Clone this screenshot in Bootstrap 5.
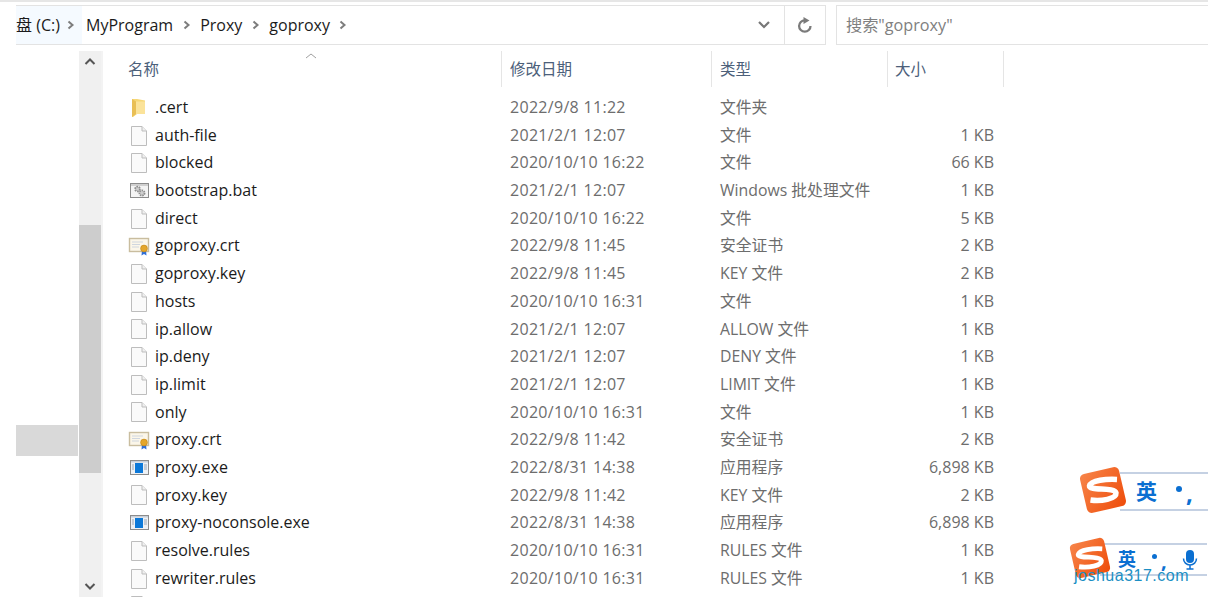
<!DOCTYPE html>
<html lang="zh-CN">
<head>
<meta charset="utf-8">
<title>goproxy</title>
<link href="https://cdn.jsdelivr.net/npm/bootstrap@5.3.0/dist/css/bootstrap.min.css" rel="stylesheet">
<style>
html,body{height:616px;overflow:hidden;background:#fff}
body{font-family:"Open Sans","Noto Sans CJK SC",sans-serif;font-size:16px;color:#1b1b1b;position:relative}
.top-rule{height:2px;background:#e6e6e6}
.addr-wrap{height:40px;margin-top:3px;padding-left:16px}
.addr-bar{width:810px;border:1px solid #e3e3e3;border-left:0;height:40px}
.crumbs{flex:1;min-width:0;font-size:16px;line-height:38px}
.crumb-root{width:66px;background:#f5faff;padding-right:6px}
.crumb-gap{width:27px}
.crumb-gap svg,.crumb-root svg{display:block}
.dd-btn{width:40px}
.refresh-btn{width:41px;border-left:1px solid #e3e3e3}
.search-box{margin-left:10px;flex:1;height:40px;border:1px solid #e3e3e3;border-right:0;color:#808080;font-size:16.2px;line-height:38px;padding-left:9px}
.main-area{height:546px;margin-top:6px;padding-left:16px}
.nav-pane{width:62px;position:relative}
.nav-sel{height:31px;margin-top:374px;background:#d9d9d9}
.scroll-rail{width:22px;margin-left:1px;background:#f0f0f0;height:546px}
.scroll-up,.scroll-down{height:21px}
.scroll-spacer{height:153px}
.scroll-thumb{height:248px;background:#cdcdcd}
.scroll-rest{flex:1}
.pane-rule{width:2px;background:#f3f3f3}
.file-list{flex:1;min-width:0;overflow:hidden;height:546px}
.head-row{height:36px;color:#4c607a;font-size:15.5px;position:relative}
.head-row>div{height:36px;line-height:36px;border-right:1px solid #e5e5e5}
.c-name{width:399px;padding-left:25px}
.c-date{width:210px;padding-left:8px}
.c-type{width:176px;padding-left:8px}
.c-size{width:116px;padding-right:10px;text-align:right}
.head-row .c-size{text-align:left;padding-left:7px}
.sort-mark{position:absolute;left:202px;top:1px}
.rows-top{height:7px}
.file-row{height:27.7px;line-height:27.7px;white-space:nowrap}
.file-row .c-name{display:flex;align-items:center;padding-left:25px;color:#1b1b1b}
.file-row .c-date,.file-row .c-type,.file-row .c-size{color:#6d6d6d}
.file-row .c-date{font-size:16px;letter-spacing:.3px}
.file-row .c-type{font-size:15.8px}
.file-row .c-size{font-size:16px}
.f-icon{width:22px;height:22px;margin-right:5px;flex:none}
.ime{position:absolute;display:flex;align-items:center}
.ime-one{left:1120px;top:472px;width:88px;height:39px}
.ime-two{left:1100px;top:543px;width:107px;height:33px}
.ime-bar{width:100%;height:100%;background:#fff;border-top:2px solid #c5d1e3;border-bottom:2px solid #c5d1e3;display:flex;align-items:center;color:#0b6fd1;font-weight:700}
.ime-one .ime-bar{padding-left:16px;font-size:21px}
.ime-two .ime-bar{padding-left:18px;font-size:18px}
.ime-logo{position:absolute}
.ime-one .ime-logo{left:-41px;top:-6px}
.ime-two .ime-logo{left:-31px;top:-6px}
.ime-dot{width:6px;height:6px;border-radius:50%;background:#0b6fd1;flex:none}
.ime-comma{font-size:24px;line-height:1;margin-left:4px;margin-top:2px}
.ime-one .ime-dot{margin-left:19px;margin-top:-6px}
.ime-two .ime-dot{margin-left:16px;margin-top:-6px;width:5px;height:5px}
.ime-two .ime-comma{font-size:20px;margin-left:4px}
.ime-mic{margin-left:15px;flex:none}
.wm{position:absolute;left:1074px;top:565px;font-family:"Liberation Sans",sans-serif;font-size:16px;letter-spacing:.5px;color:#1c8fc4;line-height:22px}
</style>
</head>
<body>
<svg width="0" height="0" class="position-absolute">
<defs>
<linearGradient id="sg-fill" x1="0" y1="0" x2="1" y2="1"><stop offset="0" stop-color="#f7854a"/><stop offset="1" stop-color="#ee4c0a"/></linearGradient>
<symbol id="i-file" viewBox="0 0 22 22"><path d="M3.500 1.500H14L18.500 6V20.500H3.500Z" fill="#fafafa" stroke="#bdbdbd"/><path d="M14 1.500V6H18.500" fill="#f0f0f0" stroke="#bdbdbd"/></symbol>
<symbol id="i-folder" viewBox="0 0 22 22"><path d="M4 2H9L17 3.500V17H9L5 20H4Z" fill="#f6d776"/><path d="M4 2L8 4.500V17L4 20Z" fill="#e9bf55"/><path d="M8 4.500H17V17H8Z" fill="#fbe39a"/></symbol>
<symbol id="i-bat" viewBox="0 0 22 22"><rect x="2.500" y="3.500" width="18" height="14" fill="#f4f4f4" stroke="#8c8c8c"/><rect x="3" y="4" width="17" height="2" fill="#d0d0d0"/><circle cx="9.500" cy="9" r="2.400" fill="#cfcfcf" stroke="#8e8e8e" stroke-width="1.800" stroke-dasharray="1.500 .8"/><circle cx="14" cy="13" r="2.600" fill="#cfcfcf" stroke="#8e8e8e" stroke-width="1.800" stroke-dasharray="1.500 .8"/></symbol>
<symbol id="i-crt" viewBox="0 0 22 22"><rect x="1.500" y="3.500" width="19" height="13" fill="#fbf6e9" stroke="#c9bd9f" stroke-width="1.400"/><path d="M4 7H15M4 9.500H12M4 12H11" stroke="#cfd6df"/><path d="M14 15L13.500 20.500L16 19L18.500 20.500L18 15Z" fill="#2f6fd8"/><circle cx="16" cy="13.500" r="3.400" fill="#e4a62b" stroke="#c28412" stroke-width=".6"/></symbol>
<symbol id="i-exe" viewBox="0 0 22 22"><rect x="2.500" y="3.500" width="18" height="14" fill="#eef1f5" stroke="#8c8c8c"/><rect x="3" y="4" width="17" height="1.500" fill="#c7cfd9"/><rect x="7" y="6" width="8" height="10" fill="#0b78d8"/><path d="M4 8H6M4 10H6M4 12H6M16 8H19M16 10H19M16 12H19" stroke="#9aa7b6"/></symbol>
<symbol id="i-chev" viewBox="0 0 10 12"><path d="M2.500 2.500L6.500 6L2.500 9.500" fill="none" stroke="#7d7d7d" stroke-width="2"/></symbol>
<symbol id="i-sogou" viewBox="0 0 48 48"><rect x="4" y="4" width="40" height="40" rx="5" fill="url(#sg-fill)" transform="rotate(-13 24 24)"/><path d="M38 13.500C28 13 12 14 10.500 20C10 25 36 21 37 27C37.500 33 22 35.500 11.500 34" fill="none" stroke="#fff" stroke-width="5.500"/></symbol>
</defs>
</svg>

<div class="top-rule"></div>
<div class="addr-wrap d-flex">
  <div class="addr-bar d-flex">
    <div class="crumbs d-flex align-items-center">
      <div class="crumb-root d-flex align-items-center justify-content-between"><span>盘 (C:)</span><svg width="10" height="12"><use href="#i-chev"/></svg></div>
      <span class="ms-1">MyProgram</span>
      <div class="crumb-gap d-flex justify-content-center"><svg width="10" height="12"><use href="#i-chev"/></svg></div>
      <span>Proxy</span>
      <div class="crumb-gap d-flex justify-content-center"><svg width="10" height="12"><use href="#i-chev"/></svg></div>
      <span>goproxy</span>
      <div class="crumb-gap d-flex justify-content-center"><svg width="10" height="12"><use href="#i-chev"/></svg></div>
    </div>
    <div class="dd-btn d-flex align-items-center justify-content-center"><svg width="14" height="10" viewBox="0 0 14 10"><path d="M2 2L7 7L12 2" fill="none" stroke="#777" stroke-width="2.200"/></svg></div>
    <div class="refresh-btn d-flex align-items-center justify-content-center"><svg width="16" height="16" viewBox="0 0 16 16"><path d="M13.500 9A5.700 5.700 0 1 1 7.800 3.300" fill="none" stroke="#7b7b7b" stroke-width="2.300"/><path d="M6.500 0L12.500 3.500L6.500 7Z" fill="#7b7b7b"/></svg></div>
  </div>
  <div class="search-box">搜索"goproxy"</div>
</div>

<div class="main-area d-flex">
  <div class="nav-pane"><div class="nav-sel"></div></div>
  <div class="scroll-rail d-flex flex-column">
    <div class="scroll-up d-flex align-items-center justify-content-center"><svg width="12" height="9" viewBox="0 0 12 9"><path d="M1.500 7L6 2.500L10.500 7" fill="none" stroke="#555" stroke-width="2"/></svg></div>
    <div class="scroll-spacer"></div>
    <div class="scroll-thumb"></div>
    <div class="scroll-rest"></div>
    <div class="scroll-down d-flex align-items-center justify-content-center"><svg width="12" height="9" viewBox="0 0 12 9"><path d="M1.500 2L6 6.500L10.500 2" fill="none" stroke="#555" stroke-width="2"/></svg></div>
  </div>
  <div class="pane-rule"></div>
  <div class="file-list">
    <div class="head-row d-flex">
      <div class="c-name">名称</div><div class="c-date">修改日期</div><div class="c-type">类型</div><div class="c-size">大小</div>
      <svg class="sort-mark" width="12" height="8" viewBox="0 0 12 8"><path d="M1 6L6 2L11 6" fill="none" stroke="#a0a0a0"/></svg>
    </div>
    <div class="rows-top"></div>
    <div class="file-row d-flex"><div class="c-name"><svg class="f-icon"><use href="#i-folder"/></svg>.cert</div><div class="c-date">2022/9/8 11:22</div><div class="c-type">文件夹</div><div class="c-size"></div></div>
    <div class="file-row d-flex"><div class="c-name"><svg class="f-icon"><use href="#i-file"/></svg>auth-file</div><div class="c-date">2021/2/1 12:07</div><div class="c-type">文件</div><div class="c-size">1 KB</div></div>
    <div class="file-row d-flex"><div class="c-name"><svg class="f-icon"><use href="#i-file"/></svg>blocked</div><div class="c-date">2020/10/10 16:22</div><div class="c-type">文件</div><div class="c-size">66 KB</div></div>
    <div class="file-row d-flex"><div class="c-name"><svg class="f-icon"><use href="#i-bat"/></svg>bootstrap.bat</div><div class="c-date">2021/2/1 12:07</div><div class="c-type">Windows 批处理文件</div><div class="c-size">1 KB</div></div>
    <div class="file-row d-flex"><div class="c-name"><svg class="f-icon"><use href="#i-file"/></svg>direct</div><div class="c-date">2020/10/10 16:22</div><div class="c-type">文件</div><div class="c-size">5 KB</div></div>
    <div class="file-row d-flex"><div class="c-name"><svg class="f-icon"><use href="#i-crt"/></svg>goproxy.crt</div><div class="c-date">2022/9/8 11:45</div><div class="c-type">安全证书</div><div class="c-size">2 KB</div></div>
    <div class="file-row d-flex"><div class="c-name"><svg class="f-icon"><use href="#i-file"/></svg>goproxy.key</div><div class="c-date">2022/9/8 11:45</div><div class="c-type">KEY 文件</div><div class="c-size">2 KB</div></div>
    <div class="file-row d-flex"><div class="c-name"><svg class="f-icon"><use href="#i-file"/></svg>hosts</div><div class="c-date">2020/10/10 16:31</div><div class="c-type">文件</div><div class="c-size">1 KB</div></div>
    <div class="file-row d-flex"><div class="c-name"><svg class="f-icon"><use href="#i-file"/></svg>ip.allow</div><div class="c-date">2021/2/1 12:07</div><div class="c-type">ALLOW 文件</div><div class="c-size">1 KB</div></div>
    <div class="file-row d-flex"><div class="c-name"><svg class="f-icon"><use href="#i-file"/></svg>ip.deny</div><div class="c-date">2021/2/1 12:07</div><div class="c-type">DENY 文件</div><div class="c-size">1 KB</div></div>
    <div class="file-row d-flex"><div class="c-name"><svg class="f-icon"><use href="#i-file"/></svg>ip.limit</div><div class="c-date">2021/2/1 12:07</div><div class="c-type">LIMIT 文件</div><div class="c-size">1 KB</div></div>
    <div class="file-row d-flex"><div class="c-name"><svg class="f-icon"><use href="#i-file"/></svg>only</div><div class="c-date">2020/10/10 16:31</div><div class="c-type">文件</div><div class="c-size">1 KB</div></div>
    <div class="file-row d-flex"><div class="c-name"><svg class="f-icon"><use href="#i-crt"/></svg>proxy.crt</div><div class="c-date">2022/9/8 11:42</div><div class="c-type">安全证书</div><div class="c-size">2 KB</div></div>
    <div class="file-row d-flex"><div class="c-name"><svg class="f-icon"><use href="#i-exe"/></svg>proxy.exe</div><div class="c-date">2022/8/31 14:38</div><div class="c-type">应用程序</div><div class="c-size">6,898 KB</div></div>
    <div class="file-row d-flex"><div class="c-name"><svg class="f-icon"><use href="#i-file"/></svg>proxy.key</div><div class="c-date">2022/9/8 11:42</div><div class="c-type">KEY 文件</div><div class="c-size">2 KB</div></div>
    <div class="file-row d-flex"><div class="c-name"><svg class="f-icon"><use href="#i-exe"/></svg>proxy-noconsole.exe</div><div class="c-date">2022/8/31 14:38</div><div class="c-type">应用程序</div><div class="c-size">6,898 KB</div></div>
    <div class="file-row d-flex"><div class="c-name"><svg class="f-icon"><use href="#i-file"/></svg>resolve.rules</div><div class="c-date">2020/10/10 16:31</div><div class="c-type">RULES 文件</div><div class="c-size">1 KB</div></div>
    <div class="file-row d-flex"><div class="c-name"><svg class="f-icon"><use href="#i-file"/></svg>rewriter.rules</div><div class="c-date">2020/10/10 16:31</div><div class="c-type">RULES 文件</div><div class="c-size">1 KB</div></div>
    <div class="file-row d-flex"><div class="c-name"><svg class="f-icon"><use href="#i-file"/></svg></div></div>
  </div>
</div>

<div class="ime ime-one">
  <div class="ime-bar"><span>英</span><span class="ime-dot"></span><span class="ime-comma">,</span></div>
  <svg class="ime-logo" width="48" height="48"><use href="#i-sogou"/></svg>
</div>
<div class="ime ime-two">
  <div class="ime-bar"><span>英</span><span class="ime-dot"></span><span class="ime-comma">,</span>
    <svg class="ime-mic" width="16" height="21" viewBox="0 0 16 21"><rect x="4" y="1" width="8" height="13" rx="4" fill="#0b6fd1"/><path d="M1.500 9.500A6.500 6.500 0 0 0 14.500 9.500M8 16V20M4.500 20H11.500" fill="none" stroke="#0b6fd1" stroke-width="1.500"/></svg>
  </div>
  <svg class="ime-logo" width="42" height="42"><use href="#i-sogou"/></svg>
</div>
<div class="wm">joshua317.com</div>
</body>
</html>
